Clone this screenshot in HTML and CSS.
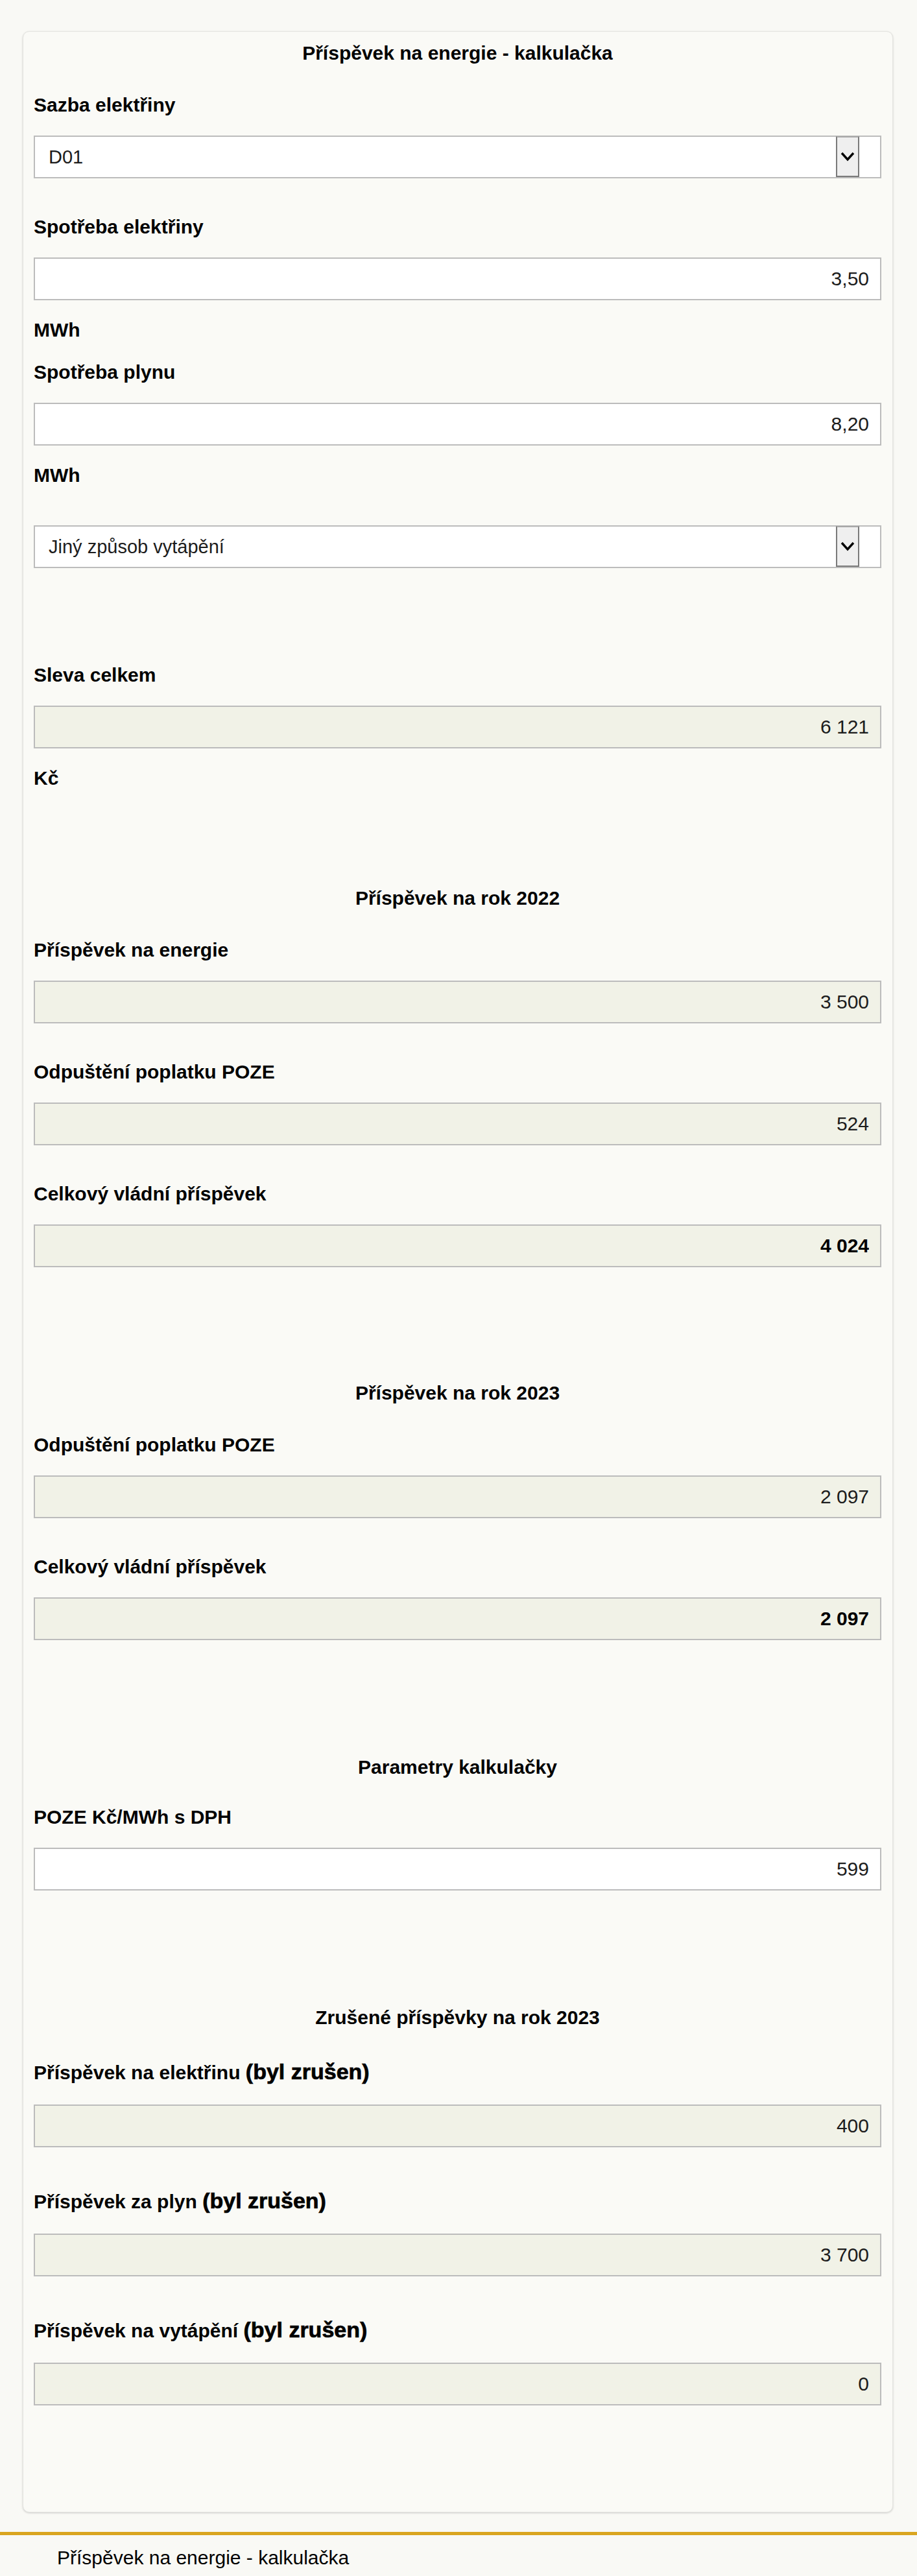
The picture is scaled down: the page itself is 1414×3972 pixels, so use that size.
FILE: index.html
```html
<!DOCTYPE html>
<html lang="cs">
<head>
    <meta charset="UTF-8">
    <meta name="viewport" content="width=device-width, initial-scale=1.0">
    <title>Příspěvek na energie - kalkulačka</title>
    <link rel="stylesheet" href="styles.css">
</head>
<body>

    <!-- Calculator card -->
    <div class="page">
    <div class="card">

        <!-- Inputs -->
        <div class="section">
            <h2 class="section-title">Příspěvek na energie - kalkulačka</h2>

            <div class="field">
                <label class="label">Sazba elektřiny</label>
                <div class="select-wrap">
                    <select class="select">
                        <option>D01</option>
                        <option>D02</option>
                        <option>D25</option>
                    </select>
                    <span class="select-btn">
                        <svg width="22" height="15" viewBox="0 0 22 15"><polyline points="2,2 11,12 20,2" fill="none" stroke="#000" stroke-width="3.4"/></svg>
                    </span>
                </div>
            </div>

            <div class="field">
                <label class="label">Spotřeba elektřiny</label>
                <input class="input" type="text" value="3,50">
            </div>
            <div class="unit">MWh</div>

            <div class="field field-after-unit">
                <label class="label">Spotřeba plynu</label>
                <input class="input" type="text" value="8,20">
            </div>
            <div class="unit">MWh</div>

            <div class="field field-heating">
                <div class="select-wrap">
                    <select class="select">
                        <option>Jiný způsob vytápění</option>
                        <option>Elektrické vytápění</option>
                    </select>
                    <span class="select-btn">
                        <svg width="22" height="15" viewBox="0 0 22 15"><polyline points="2,2 11,12 20,2" fill="none" stroke="#000" stroke-width="3.4"/></svg>
                    </span>
                </div>
            </div>

            <div class="field field-total">
                <label class="label">Sleva celkem</label>
                <input class="input out" type="text" value="6 121" readonly>
            </div>
            <div class="unit">Kč</div>
        </div>

        <!-- 2022 -->
        <div class="section section-2022">
            <h2 class="section-title">Příspěvek na rok 2022</h2>
            <div class="field">
                <label class="label">Příspěvek na energie</label>
                <input class="input out" type="text" value="3 500" readonly>
            </div>
            <div class="field">
                <label class="label">Odpuštění poplatku POZE</label>
                <input class="input out" type="text" value="524" readonly>
            </div>
            <div class="field">
                <label class="label">Celkový vládní příspěvek</label>
                <input class="input out sum" type="text" value="4 024" readonly>
            </div>
        </div>

        <!-- 2023 -->
        <div class="section">
            <h2 class="section-title">Příspěvek na rok 2023</h2>
            <div class="field">
                <label class="label">Odpuštění poplatku POZE</label>
                <input class="input out" type="text" value="2 097" readonly>
            </div>
            <div class="field">
                <label class="label">Celkový vládní příspěvek</label>
                <input class="input out sum" type="text" value="2 097" readonly>
            </div>
        </div>

        <!-- Parameters -->
        <div class="section">
            <h2 class="section-title">Parametry kalkulačky</h2>
            <div class="field field-param">
                <label class="label">POZE Kč/MWh s DPH</label>
                <input class="input" type="text" value="599">
            </div>
        </div>

        <!-- Cancelled -->
        <div class="section">
            <h2 class="section-title">Zrušené příspěvky na rok 2023</h2>
            <div class="field field-cancelled">
                <label class="label">Příspěvek na elektřinu <strong>(byl zrušen)</strong></label>
                <input class="input out" type="text" value="400" readonly>
            </div>
            <div class="field field-cancelled">
                <label class="label">Příspěvek za plyn <strong>(byl zrušen)</strong></label>
                <input class="input out" type="text" value="3 700" readonly>
            </div>
            <div class="field field-cancelled">
                <label class="label">Příspěvek na vytápění <strong>(byl zrušen)</strong></label>
                <input class="input out" type="text" value="0" readonly>
            </div>
        </div>

    </div>
    </div>

    <!-- Footer -->
    <div class="footer">
        <p>Příspěvek na energie - kalkulačka</p>
    </div>

</body>
</html>
```

FILE: styles.css
```css
body {
    margin: 0;
    padding: 0;
    background-color: #f9f9f5;
    font-family: "Liberation Sans", Arial, sans-serif;
    color: #000;
}
.page {
    padding: 48px 37px 0 35px;
}
/* Card */
.card {
    background-color: #fafaf6;
    border: 1px solid #e4e4e0;
    border-radius: 10px;
    box-shadow: 0 1px 3px rgba(0, 0, 0, 0.18);
    padding: 17px 17px 164px 16px;
}
.section + .section {
    margin-top: 180px;
}
.section + .section-2022 {
    margin-top: 153px;
}
.section-2022 + .section {
    margin-top: 178px;
}
.section-title {
    margin: 0;
    font-size: 30px;
    line-height: 32px;
    font-weight: bold;
    text-align: center;
}
/* Fields */
.field {
    margin-top: 59px;
}
.section-title + .field {
    margin-top: 48px;
}
.field-after-unit {
    margin-top: 33px;
}
.field-heating {
    margin-top: 61px;
}
.field-total {
    margin-top: 149px;
}
.section-title + .field-param {
    margin-top: 45px;
}
.label {
    display: block;
    font-size: 30px;
    line-height: 32px;
    font-weight: bold;
    margin-bottom: 31px;
}
.field-cancelled {
    margin-top: 61px;
}
.section-title + .field-cancelled {
    margin-top: 46px;
}
.field-cancelled .label {
    line-height: 42px;
    margin-bottom: 28px;
}
.field-cancelled .label strong {
    font-size: 34px;
    font-weight: bold;
    -webkit-text-stroke: 0.7px #000;
}
.unit {
    margin-top: 30px;
    font-size: 30px;
    line-height: 32px;
    font-weight: bold;
}
/* Inputs */
.input {
    display: block;
    box-sizing: border-box;
    width: 100%;
    height: 66px;
    margin: 0;
    padding: 0 17px;
    border: 2px solid #bcbcbc;
    border-radius: 0;
    background-color: #fff;
    font-family: "Liberation Sans", Arial, sans-serif;
    font-size: 30px;
    color: #1c1c1c;
    text-align: right;
    outline: none;
}
.input.out {
    background-color: #f1f2e7;
}
.input.sum {
    font-weight: bold;
    color: #000;
}
/* Select */
.select-wrap {
    position: relative;
}
.select {
    display: block;
    box-sizing: border-box;
    width: 100%;
    height: 66px;
    margin: 0;
    padding: 0 60px 0 21px;
    border: 2px solid #bcbcbc;
    border-radius: 0;
    background-color: #fff;
    font-family: "Liberation Sans", Arial, sans-serif;
    font-size: 29px;
    color: #1c1c1c;
    -webkit-appearance: none;
    appearance: none;
}
.select-btn {
    position: absolute;
    top: 1px;
    bottom: 2px;
    right: 34px;
    width: 32px;
    display: flex;
    align-items: center;
    justify-content: center;
    background-color: #efefef;
    border: 2px solid #7a7a7a;
    border-top-color: #a8a8a8;
    pointer-events: none;
}
/* Footer */
.footer {
    margin-top: 30px;
    border-top: 5px solid #daa520;
}
.footer p {
    margin: 0;
    padding: 19px 0 18px 88px;
    font-size: 30px;
    line-height: 32px;
}
```
